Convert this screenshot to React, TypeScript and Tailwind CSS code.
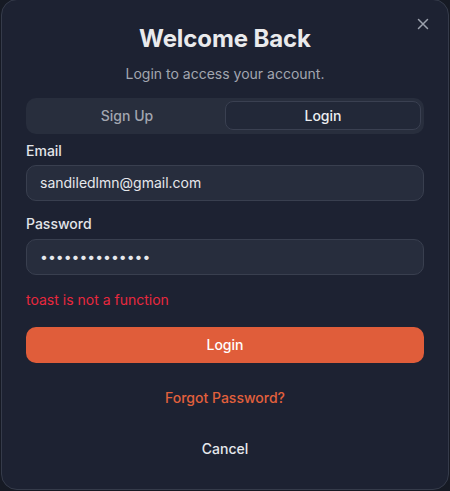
import React from "react";

export default function App() {
  return (
    <div className="w-[450px] h-[491px] bg-[#161a24] flex justify-center" style={{ fontFamily: "Inter, 'Noto Sans', sans-serif" }}>
      <div className="relative w-[448px] h-[491px] -mt-px bg-[#1d2232] border border-[#353b4a] rounded-2xl px-6 pt-[23px] flex flex-col">
        <button className="absolute right-[19px] top-[18px] text-[#9ba1ad]">
          <svg width="12" height="12" viewBox="0 0 12 12" fill="none" stroke="currentColor" strokeWidth="1.5" strokeLinecap="round">
            <path d="M1.5 1.5l9 9M10.5 1.5l-9 9" />
          </svg>
        </button>
        <h1 className="text-center text-[24px] leading-8 font-bold text-[#e9eaec] tracking-[-0.1px]">Welcome Back</h1>
        <p className="text-center text-sm text-[#a2a6b0] mt-[9px] leading-5">Login to access your account.</p>
        <div className="mt-[14px] h-[36px] bg-[#282e3d] rounded-[10px] p-[3px] pb-[4px] grid grid-cols-2">
          <div className="flex items-center justify-center text-sm font-medium text-[#a2a6b0]">Sign Up</div>
          <div className="flex items-center justify-center text-sm font-medium text-[#eceef1] bg-[#222838] border border-[#3a4051] rounded-lg">Login</div>
        </div>
        <label className="mt-[7px] text-sm font-medium text-[#e3e5e9] leading-5">Email</label>
        <div className="mt-[4px] h-[36px] bg-[#272d3d] border border-[#393f4f] rounded-[10px] flex items-center px-[13px] text-sm text-[#e6e8ec]">sandiledlmn@gmail.com</div>
        <label className="mt-[13px] text-sm font-medium text-[#e3e5e9] leading-5">Password</label>
        <div className="mt-[5px] h-[36px] bg-[#272d3d] border border-[#393f4f] rounded-[10px] flex items-center px-[13px] text-sm text-[#e6e8ec]">••••••••••••••</div>
        <p className="mt-[15px] text-sm text-[#e8283e] leading-5">toast is not a function</p>
        <button className="mt-[17px] h-[36px] bg-[#e05d3a] rounded-[10px] text-sm font-medium text-white">Login</button>
        <button className="mt-[25px] text-sm font-medium text-[#e2603c] leading-5">Forgot Password?</button>
        <button className="mt-[31px] text-sm font-medium text-[#e6e8ec] leading-5">Cancel</button>
      </div>
    </div>
  );
}
